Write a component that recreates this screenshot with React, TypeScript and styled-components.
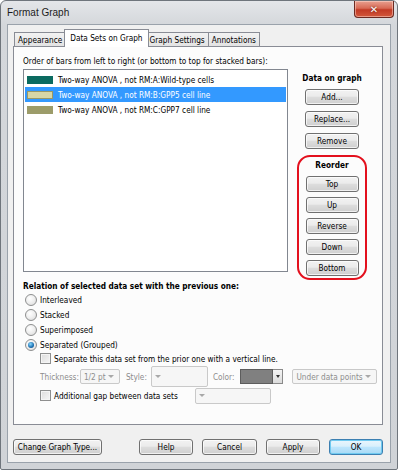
import React from 'react';
import styled, { createGlobalStyle, css } from 'styled-components';

const GlobalStyle = createGlobalStyle`
  html, body {
    margin: 0;
    padding: 0;
    background: #ffffff;
  }
  body {
    font-family: 'DejaVu Sans Condensed', 'DejaVu Sans', sans-serif;
    font-size: 8.2px;
    color: #000;
  }
`;

const Window = styled.div`
  box-sizing: border-box;
  width: 398px;
  height: 470px;
  border: 1px solid #6f757c;
  border-radius: 6px 6px 2px 2px;
  background: linear-gradient(180deg, #e4e6e9 0px, #d4d7db 24px, #d0d3d7 100%);
  padding: 0 6px 6px 6px;
  display: flex;
  flex-direction: column;
`;

const TitleBar = styled.div`
  height: 23px;
  display: flex;
  align-items: flex-start;
  justify-content: space-between;
`;

const Title = styled.span`
  font-family: 'Liberation Sans', sans-serif;
  font-size: 10px;
  margin-top: 6px;
  color: #1b1b1b;
`;

const CloseButton = styled.div`
  width: 38px;
  height: 16px;
  margin-right: -3px;
  border: 1px solid #6b2a22;
  border-top: none;
  border-radius: 0 0 4px 4px;
  background: linear-gradient(180deg, #e8a090 0%, #d86a55 45%, #c23a25 55%, #d2583c 100%);
  box-shadow: inset 0 0 0 1px rgba(255, 220, 210, 0.5);
  display: flex;
  align-items: center;
  justify-content: center;
  color: #fff;
  font-family: 'DejaVu Sans', sans-serif;
  font-weight: bold;
  font-size: 10px;
  text-shadow: 0 0 2px #5a1a10;
`;

const Client = styled.div`
  flex: 1;
  border: 1px solid #9aa2ab;
  background: #f0f0f0;
  padding: 4px 7px 0 5px;
  display: flex;
  flex-direction: column;
`;

const TabStrip = styled.div`
  height: 17px;
  display: flex;
  align-items: flex-end;
  padding-left: 1px;
`;

const Tab = styled.div<{ $active?: boolean }>`
  box-sizing: border-box;
  border: 1px solid #898c95;
  border-bottom: none;
  padding: 0 3px;
  display: flex;
  align-items: center;
  white-space: nowrap;
  ${({ $active }) =>
    $active
      ? css`
          height: 18px;
          margin: 0 -2px -1px -2px;
          padding: 0 5px 2px 5px;
          background: #ffffff;
          position: relative;
          z-index: 1;
        `
      : css`
          height: 14px;
          margin-left: -1px;
          background: linear-gradient(180deg, #f2f2f2 0%, #e3e3e3 100%);
          &:first-child {
            margin-left: 0;
          }
        `}
`;

const Panel = styled.div`
  box-sizing: border-box;
  height: 379px;
  border: 1px solid #898c95;
  background: #fcfcfc;
  padding: 8px 14px 0 9px;
  display: flex;
  flex-direction: column;
`;

const TopRow = styled.div`
  display: flex;
  gap: 9px;
`;

const LeftCol = styled.div`
  width: 265px;
  display: flex;
  flex-direction: column;
`;

const Label = styled.div`
  height: 14px;
  line-height: 12px;
  white-space: nowrap;
`;

const ListBox = styled.div`
  box-sizing: border-box;
  height: 203px;
  border: 1px solid #828790;
  background: #ffffff;
  padding: 2px 1px;
`;

const Row = styled.div<{ $selected?: boolean }>`
  height: 15px;
  display: flex;
  align-items: center;
  gap: 5px;
  padding-left: 2px;
  white-space: nowrap;
  background: ${({ $selected }) => ($selected ? '#3399ff' : 'transparent')};
  color: ${({ $selected }) => ($selected ? '#ffffff' : '#000000')};
`;

const Swatch = styled.div<{ $fill: string; $edge: string }>`
  box-sizing: border-box;
  width: 26px;
  height: 8px;
  background: ${({ $fill }) => $fill};
  border: 1px solid ${({ $edge }) => $edge};
`;

const RightCol = styled.div`
  width: 70px;
  display: flex;
  flex-direction: column;
  align-items: center;
  padding-top: 17px;
`;

const Heading = styled.div`
  font-weight: bold;
  height: 12px;
  line-height: 12px;
  white-space: nowrap;
`;

const Button = styled.div<{ $w?: number; $default?: boolean }>`
  box-sizing: border-box;
  width: ${({ $w }) => $w ?? 54}px;
  height: 16px;
  border: 1px solid #707070;
  border-radius: 3px;
  background: linear-gradient(180deg, #f2f2f2 0%, #ebebeb 45%, #dddddd 50%, #cfcfcf 100%);
  box-shadow: inset 0 0 0 1px rgba(255, 255, 255, 0.7);
  display: flex;
  align-items: center;
  justify-content: center;
  white-space: nowrap;
  ${({ $default }) =>
    $default &&
    css`
      border-color: #3c7fb1;
      box-shadow: inset 0 0 0 1px #6fcaf0;
      background: linear-gradient(180deg, #eaf6fd 0%, #d9f0fc 45%, #bee6fd 50%, #a7d9f5 100%);
    `}
`;

const SideButtons = styled.div`
  margin-top: 5px;
  display: flex;
  flex-direction: column;
  gap: 6px;
`;

const Oval = styled.div`
  box-sizing: border-box;
  margin-top: 6px;
  width: 70px;
  height: 125px;
  border: 2px solid #e3101d;
  border-radius: 13px;
  display: flex;
  flex-direction: column;
  align-items: center;
  padding-top: 2px;
`;

const OvalButtons = styled.div`
  margin-top: 5px;
  display: flex;
  flex-direction: column;
  gap: 5px;
`;

const SectionTitle = styled.div`
  font-weight: bold;
  height: 12px;
  line-height: 12px;
  white-space: nowrap;
`;

const Options = styled.div`
  display: flex;
  flex-direction: column;
  padding-left: 2px;
`;

const OptionRow = styled.div`
  height: 15px;
  display: flex;
  align-items: center;
  gap: 3px;
  white-space: nowrap;
`;

const Radio = styled.div<{ $checked?: boolean }>`
  box-sizing: border-box;
  width: 12px;
  height: 12px;
  border-radius: 50%;
  border: 1px solid #8e8f8f;
  background: radial-gradient(circle at 40% 35%, #ffffff 0%, #eeeeee 50%, #d6d6d6 100%);
  display: flex;
  align-items: center;
  justify-content: center;
  &::after {
    content: '';
    display: ${({ $checked }) => ($checked ? 'block' : 'none')};
    width: 6px;
    height: 6px;
    border-radius: 50%;
    background: radial-gradient(circle at 40% 35%, #8ad8ff 0%, #1a6fb0 60%, #0b3f72 100%);
  }
`;

const SubOptions = styled.div`
  display: flex;
  flex-direction: column;
  padding-left: 17px;
`;

const CheckRow = styled.div<{ $h?: number }>`
  height: ${({ $h }) => $h ?? 13}px;
  display: flex;
  align-items: center;
  gap: 3px;
  white-space: nowrap;
`;

const CheckBox = styled.div`
  box-sizing: border-box;
  flex: none;
  width: 11px;
  height: 11px;
  border: 1px solid #8e8f8f;
  background: linear-gradient(135deg, #dcdcdc 0%, #f6f6f6 100%);
  box-shadow: inset 0 0 0 1px #f4f4f4;
`;

const LineRow = styled.div`
  height: 21px;
  margin-top: 1px;
  display: flex;
  align-items: center;
  white-space: nowrap;
`;

const Dim = styled.span<{ $ml?: number; $mr?: number }>`
  flex: none;
  color: #8d8d8d;
  margin-left: ${({ $ml }) => $ml ?? 0}px;
  margin-right: ${({ $mr }) => $mr ?? 5}px;
`;

const Combo = styled.div<{ $w: number; $h?: number; $ml?: number }>`
  box-sizing: border-box;
  flex: none;
  width: ${({ $w }) => $w}px;
  height: ${({ $h }) => $h ?? 15}px;
  margin-left: ${({ $ml }) => $ml ?? 0}px;
  border: 1px solid #c9c9c9;
  border-radius: 2px;
  background: #f6f6f6;
  color: #8d8d8d;
  display: flex;
  align-items: center;
  justify-content: space-between;
  padding: 0 5px 0 3px;
  &::after {
    content: '';
    flex: none;
    border-left: 3px solid transparent;
    border-right: 3px solid transparent;
    border-top: 3px solid #a8a8a8;
  }
`;

const ColorPick = styled.div`
  flex: none;
  display: flex;
  height: 15px;
`;

const ColorWell = styled.div`
  box-sizing: border-box;
  width: 33px;
  height: 15px;
  border: 1px solid #5d5d5d;
  background: #808080;
`;

const ColorDrop = styled.div`
  box-sizing: border-box;
  width: 10px;
  height: 15px;
  border: 1px solid #8a8a8a;
  border-left: none;
  background: linear-gradient(180deg, #f4f4f4, #dcdcdc);
  display: flex;
  align-items: center;
  justify-content: center;
  &::after {
    content: '';
    border-left: 2.5px solid transparent;
    border-right: 2.5px solid transparent;
    border-top: 3px solid #333;
  }
`;

const ButtonRow = styled.div`
  margin-top: 14px;
  display: flex;
  align-items: center;
  gap: 9px;
`;

const Spacer = styled.div`
  flex: 1;
`;

const dataSets = [
  { name: 'Two-way ANOVA , not RM:A:Wild-type cells', fill: '#0b6b60', edge: '#0b6b60' },
  { name: 'Two-way ANOVA , not RM:B:GPP5 cell line', fill: '#d6d6a6', edge: '#989866', selected: true },
  { name: 'Two-way ANOVA , not RM:C:GPP7 cell line', fill: '#9c9c6a', edge: '#9c9c6a' },
];

const relations = [
  { label: 'Interleaved' },
  { label: 'Stacked' },
  { label: 'Superimposed' },
  { label: 'Separated (Grouped)', checked: true },
];

export default function App() {
  return (
    <>
      <GlobalStyle />
      <Window>
        <TitleBar>
          <Title>Format Graph</Title>
          <CloseButton>✕</CloseButton>
        </TitleBar>
        <Client>
          <TabStrip>
            <Tab>Appearance</Tab>
            <Tab $active>Data Sets on Graph</Tab>
            <Tab>Graph Settings</Tab>
            <Tab>Annotations</Tab>
          </TabStrip>
          <Panel>
            <TopRow>
              <LeftCol>
                <Label>Order of bars from left to right (or bottom to top for stacked bars):</Label>
                <ListBox>
                  {dataSets.map((d) => (
                    <Row key={d.name} $selected={d.selected}>
                      <Swatch $fill={d.fill} $edge={d.edge} />
                      {d.name}
                    </Row>
                  ))}
                </ListBox>
              </LeftCol>
              <RightCol>
                <Heading>Data on graph</Heading>
                <SideButtons>
                  <Button>Add...</Button>
                  <Button>Replace...</Button>
                  <Button>Remove</Button>
                </SideButtons>
                <Oval>
                  <Heading>Reorder</Heading>
                  <OvalButtons>
                    {['Top', 'Up', 'Reverse', 'Down', 'Bottom'].map((b) => (
                      <Button key={b} $w={53}>
                        {b}
                      </Button>
                    ))}
                  </OvalButtons>
                </Oval>
              </RightCol>
            </TopRow>
            <SectionTitle>Relation of selected data set with the previous one:</SectionTitle>
            <Options>
              {relations.map((r) => (
                <OptionRow key={r.label}>
                  <Radio $checked={r.checked} />
                  {r.label}
                </OptionRow>
              ))}
            </Options>
            <SubOptions>
              <CheckRow>
                <CheckBox />
                Separate this data set from the prior one with a vertical line.
              </CheckRow>
              <LineRow>
                <Dim $mr={1}>Thickness:</Dim>
                <Combo $w={40}>1/2 pt</Combo>
                <Dim $ml={6} $mr={4}>Style:</Dim>
                <Combo $w={57} $h={21} />
                <Dim $ml={5} $mr={6}>Color:</Dim>
                <ColorPick>
                  <ColorWell />
                  <ColorDrop />
                </ColorPick>
                <Combo $w={85} $ml={9}>Under data points</Combo>
              </LineRow>
              <CheckRow $h={17}>
                <CheckBox />
                Additional gap between data sets
                <Combo $w={76} $h={16} $ml={14} />
              </CheckRow>
            </SubOptions>
          </Panel>
          <ButtonRow>
            <Button $w={89}>Change Graph Type...</Button>
            <Spacer />
            <Button>Help</Button>
            <Button $w={55}>Cancel</Button>
            <Button>Apply</Button>
            <Button $default>OK</Button>
          </ButtonRow>
        </Client>
      </Window>
    </>
  );
}
